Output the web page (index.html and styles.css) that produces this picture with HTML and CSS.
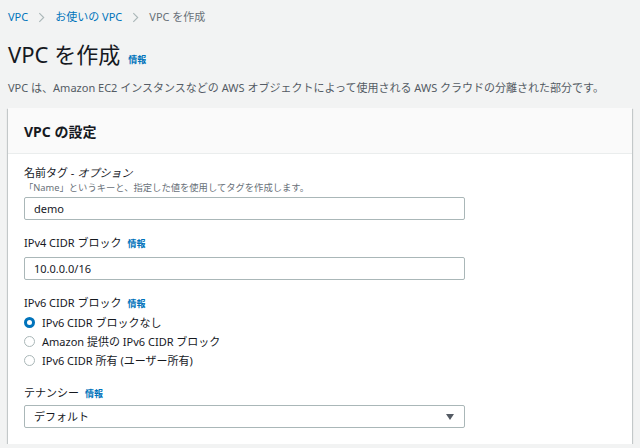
FILE: index.html
```html
<!DOCTYPE html>
<html lang="ja">
<head>
<meta charset="utf-8">
<title>VPC を作成</title>
<link rel="stylesheet" href="styles.css">
</head>
<body>
<main class="page">
  <nav class="crumbs">
    <a class="crumb-link" href="#">VPC</a>
    <svg class="chev" viewBox="0 0 8 12" width="7" height="11"><path d="M1.5 1 L6.5 6 L1.5 11" fill="none" stroke="#aab7b8" stroke-width="1.3"/></svg>
    <a class="crumb-link" href="#">お使いの VPC</a>
    <svg class="chev" viewBox="0 0 8 12" width="7" height="11"><path d="M1.5 1 L6.5 6 L1.5 11" fill="none" stroke="#aab7b8" stroke-width="1.3"/></svg>
    <span class="crumb-current">VPC を作成</span>
  </nav>

  <h1 class="title">VPC を作成 <a class="info" href="#">情報</a></h1>
  <p class="desc">VPC は、Amazon EC2 インスタンスなどの AWS オブジェクトによって使用される AWS クラウドの分離された部分です。</p>

  <section class="card">
    <header class="card-head">VPC の設定</header>
    <div class="card-body">
      <div class="field">
        <div class="label">名前タグ - <i>オプション</i></div>
        <div class="hint">「Name」というキーと、指定した値を使用してタグを作成します。</div>
        <div class="input input-hinted">demo</div>
      </div>

      <div class="field">
        <div class="label">IPv4 CIDR ブロック <a class="info" href="#">情報</a></div>
        <div class="input">10.0.0.0/16</div>
      </div>

      <div class="field">
        <div class="label">IPv6 CIDR ブロック <a class="info" href="#">情報</a></div>
        <div class="radios">
          <div class="radio-row"><span class="radio radio-on"></span><span>IPv6 CIDR ブロックなし</span></div>
          <div class="radio-row"><span class="radio"></span><span>Amazon 提供の IPv6 CIDR ブロック</span></div>
          <div class="radio-row"><span class="radio"></span><span>IPv6 CIDR 所有 (ユーザー所有)</span></div>
        </div>
      </div>

      <div class="field field-last">
        <div class="label label-light">テナンシー <a class="info" href="#">情報</a></div>
        <div class="input select"><span>デフォルト</span><span class="caret"></span></div>
      </div>
    </div>
  </section>
</main>
</body>
</html>
```

FILE: styles.css
```css
* { box-sizing: border-box; }

html, body {
  margin: 0;
  padding: 0;
  background: #f2f3f3;
}

body {
  font-family: "Noto Sans", "Noto Sans CJK JP", sans-serif;
  color: #16191f;
  font-size: 11px;
}

.page {
  padding: 9px 8px 0 8px;
}

.crumbs {
  display: flex;
  align-items: center;
  gap: 10px;
  height: 16px;
  font-size: 11px;
  line-height: 16px;
}

.crumb-link {
  color: #0073bb;
  text-decoration: none;
}

.crumb-current {
  color: #687078;
}

.chev { display: block; }

.title {
  margin: 15px 0 0 0;
  height: 28px;
  font-size: 22px;
  line-height: 28px;
  font-weight: 400;
  display: flex;
  align-items: baseline;
  gap: 2px;
}

.info {
  color: #0073bb;
  font-size: 9px;
  font-weight: 700;
  text-decoration: none;
  margin-left: 6px;
}

.desc {
  margin: 12px 0 0 0;
  font-size: 11px;
  line-height: 16px;
  color: #545b64;
  white-space: nowrap;
}

.card {
  margin-top: 12px;
  background: #ffffff;
  box-shadow: 0 1px 1px 0 rgba(0, 28, 36, 0.3), 1px 1px 1px 0 rgba(0, 28, 36, 0.15), -1px 1px 1px 0 rgba(0, 28, 36, 0.15);
}

.card-head {
  background: #fafafa;
  border-bottom: 1px solid #eaeded;
  padding: 14px 16px 11px 16px;
  font-size: 14px;
  line-height: 20px;
  font-weight: 700;
}

.card-body {
  padding: 11px 16px 16px 16px;
  display: flex;
  flex-direction: column;
  gap: 15px;
}

.label {
  font-size: 11px;
  line-height: 16px;
  display: flex;
  align-items: baseline;
}

.label i { font-style: italic; margin-left: 3px; }

.hint {
  font-size: 9.3px;
  line-height: 13px;
  color: #687078;
}

.input {
  margin-top: 5px;
  width: 441px;
  height: 23px;
  border: 1px solid #aab7b8;
  border-radius: 2px;
  background: #fff;
  padding: 0 9px;
  font-size: 11px;
  line-height: 21px;
  color: #16191f;
}

.input-hinted { margin-top: 3px; }

.select {
  margin-top: 3px;
  display: flex;
  justify-content: space-between;
  align-items: center;
}

.caret {
  width: 0;
  height: 0;
  border-left: 4.5px solid transparent;
  border-right: 4.5px solid transparent;
  border-top: 6px solid #545b64;
  margin-right: 1px;
}

.radios {
  margin-top: 1px;
  display: flex;
  flex-direction: column;
}

.radio-row {
  height: 19px;
  display: flex;
  align-items: center;
  gap: 7px;
  font-size: 11px;
  line-height: 19px;
}

.radio {
  width: 11px;
  height: 11px;
  border-radius: 50%;
  border: 1px solid #aab7b8;
  background: #fff;
  flex: none;
}

.radio-on {
  border: 3.5px solid #0073bb;
}
```
